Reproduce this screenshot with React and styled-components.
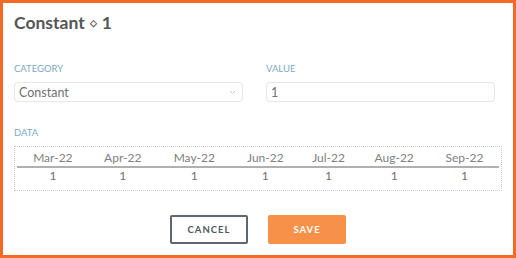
import React from 'react';
import styled, { createGlobalStyle } from 'styled-components';

const GlobalStyle = createGlobalStyle`
  html, body {
    margin: 0;
    padding: 0;
    background: #fff;
  }
  body {
    font-family: 'Lato', 'Open Sans', sans-serif;
  }
`;

const Frame = styled.div`
  box-sizing: border-box;
  width: 516px;
  height: 258px;
  border: 3px solid #f26a24;
  padding: 9px 11px 0 11px;
  display: flex;
  flex-direction: column;
`;

const Title = styled.h1`
  margin: 0;
  font-size: 17.5px;
  line-height: 22px;
  font-weight: 700;
  color: #555658;
  display: flex;
  align-items: center;
  gap: 5px;
`;

const Diamond = styled.span`
  font-size: 9px;
  font-weight: 700;
  color: #555658;
`;

const FieldsRow = styled.div`
  display: grid;
  grid-template-columns: 229px 229px;
  column-gap: 23px;
  margin-top: 29px;
`;

const Field = styled.div`
  display: flex;
  flex-direction: column;
`;

const Label = styled.label`
  font-size: 9.5px;
  line-height: 12px;
  color: #7ea9c3;
  text-transform: uppercase;
  margin-bottom: 7px;
`;

const Box = styled.div`
  box-sizing: border-box;
  height: 20px;
  border: 1px solid #e6e6e6;
  border-radius: 4px;
  padding: 0 4px;
  display: flex;
  align-items: center;
  justify-content: space-between;
  font-size: 12.5px;
  color: #707070;
`;

const Chevron = styled.svg`
  width: 7px;
  height: 5px;
  margin-right: 2px;
`;

const DataSection = styled.div`
  display: flex;
  flex-direction: column;
  margin-top: 25px;
`;

const DataBox = styled.div`
  box-sizing: border-box;
  height: 45px;
  border: 1px dotted #c8c8c8;
  padding: 0 2px;
`;

const Table = styled.table`
  width: 100%;
  border-collapse: collapse;
  font-size: 12px;
  color: #808080;
`;

const Th = styled.th`
  font-weight: 400;
  text-align: center;
  padding: 3px 0 1px;
  line-height: 15px;
  border-bottom: 2px solid #b0b0b0;
`;

const Td = styled.td`
  text-align: center;
  padding: 0;
  line-height: 15px;
  color: #707070;
`;

const Actions = styled.div`
  display: flex;
  justify-content: center;
  gap: 20px;
  margin-top: 24px;
`;

const Button = styled.button`
  box-sizing: border-box;
  width: 78px;
  height: 29px;
  border-radius: 2px;
  font-family: 'Lato', sans-serif;
  font-size: 9.5px;
  font-weight: 700;
  letter-spacing: 1px;
  cursor: pointer;
  border: ${p => (p.$primary ? '2px solid #f7914a' : '2px solid #5f6670')};
  background: ${p => (p.$primary ? '#f7914a' : '#fff')};
  color: ${p => (p.$primary ? '#fff' : '#4f5761')};
`;

const months = ['Mar-22', 'Apr-22', 'May-22', 'Jun-22', 'Jul-22', 'Aug-22', 'Sep-22'];

export default function App() {
  return (
    <Frame>
      <GlobalStyle />
      <Title>
        Constant <Diamond>◇</Diamond> 1
      </Title>

      <FieldsRow>
        <Field>
          <Label>Category</Label>
          <Box>
            Constant
            <Chevron viewBox="0 0 7 5">
              <path d="M1 1 L3.5 3.5 L6 1" fill="none" stroke="#c8c8c8" strokeWidth="1" />
            </Chevron>
          </Box>
        </Field>
        <Field>
          <Label>Value</Label>
          <Box>1</Box>
        </Field>
      </FieldsRow>

      <DataSection>
        <Label>Data</Label>
        <DataBox>
          <Table>
            <thead>
              <tr>
                {months.map(m => <Th key={m}>{m}</Th>)}
              </tr>
            </thead>
            <tbody>
              <tr>
                {months.map(m => <Td key={m}>1</Td>)}
              </tr>
            </tbody>
          </Table>
        </DataBox>
      </DataSection>

      <Actions>
        <Button>CANCEL</Button>
        <Button $primary>SAVE</Button>
      </Actions>
    </Frame>
  );
}
